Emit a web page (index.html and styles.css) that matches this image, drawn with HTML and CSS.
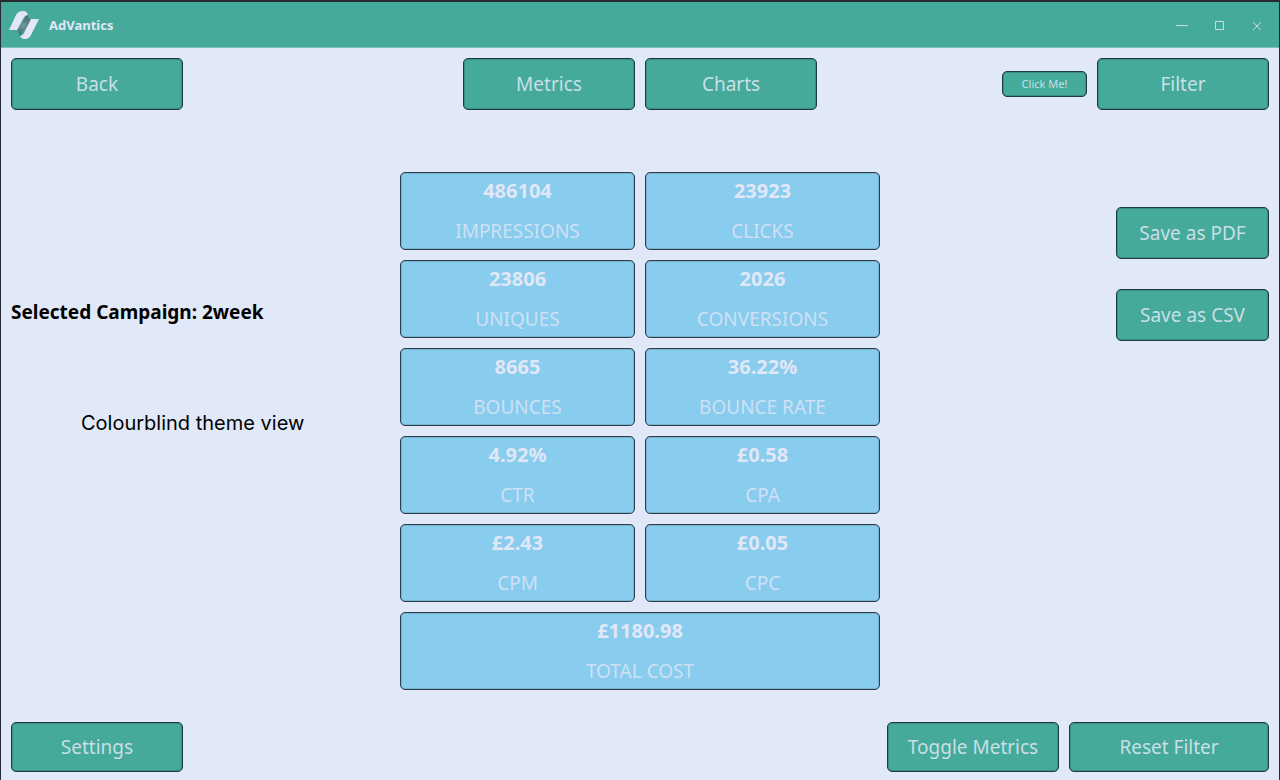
FILE: index.html
```html
<!DOCTYPE html>
<html lang="en">
<head>
<meta charset="utf-8">
<title>AdVantics</title>
<link rel="stylesheet" href="styles.css">
</head>
<body>
<div class="window">
  <header class="titlebar">
    <svg class="logo" viewBox="0 0 30 30" aria-hidden="true">
      <defs>
        <linearGradient id="fold-top" x1="0" y1="0" x2="0" y2="1">
          <stop offset="0" stop-color="#466a6c"/>
          <stop offset="1" stop-color="#7d979f"/>
        </linearGradient>
        <linearGradient id="fold-bottom" x1="0" y1="0" x2="0" y2="1">
          <stop offset="0" stop-color="#7d979f"/>
          <stop offset="1" stop-color="#466a6c"/>
        </linearGradient>
      </defs>
      <path d="M18 4L12 15L17 22L22 10Q19 8 18 4Z" fill="url(#fold-top)"/>
      <path d="M12 12L8 20Q10 23 11 26L18 16Z" fill="url(#fold-bottom)"/>
      <path d="M16 12L13 18L14 19L17 13Z" fill="#45aa99"/>
      <path d="M0 20L7 5Q9 1 14 1Q18 1 19 5Q16 5 14 9L8 20Z" fill="#e1e7f7"/>
      <path d="M30 9L22 25Q20 29 16 29Q12 29 11 26Q14 26 16 21L22 9Z" fill="#e1e7f7"/>
    </svg>
    <h1 class="app-name">AdVantics</h1>
    <div class="window-controls">
      <button class="window-control" aria-label="Minimize"><svg viewBox="0 0 12 12"><path d="M1 6.5H13"/></svg></button>
      <button class="window-control" aria-label="Maximize"><svg viewBox="0 0 12 12"><path d="M2.5 2.5H10.5V10.5H2.5Z"/></svg></button>
      <button class="window-control" aria-label="Close"><svg viewBox="0 0 12 12"><path d="M2 3L10 11M10 3L2 11"/></svg></button>
    </div>
  </header>

  <nav class="toolbar">
    <div class="group"><button class="button">Back</button></div>
    <div class="group"><button class="button">Metrics</button><button class="button">Charts</button></div>
    <div class="group group-end"><button class="button button-small">Click Me!</button><button class="button">Filter</button></div>
  </nav>

  <main class="content">
    <section class="campaign">
      <h2 class="campaign-name">Selected Campaign: 2week</h2>
      <p class="caption">Colourblind theme view</p>
    </section>
    <dl class="metrics">
      <div class="card"><dd>486104</dd><dt>IMPRESSIONS</dt></div>
      <div class="card"><dd>23923</dd><dt>CLICKS</dt></div>
      <div class="card"><dd>23806</dd><dt>UNIQUES</dt></div>
      <div class="card"><dd>2026</dd><dt>CONVERSIONS</dt></div>
      <div class="card"><dd>8665</dd><dt>BOUNCES</dt></div>
      <div class="card"><dd>36.22%</dd><dt>BOUNCE RATE</dt></div>
      <div class="card"><dd>4.92%</dd><dt>CTR</dt></div>
      <div class="card"><dd>£0.58</dd><dt>CPA</dt></div>
      <div class="card"><dd>£2.43</dd><dt>CPM</dt></div>
      <div class="card"><dd>£0.05</dd><dt>CPC</dt></div>
      <div class="card card-wide"><dd>£1180.98</dd><dt>TOTAL COST</dt></div>
    </dl>
    <aside class="exports">
      <button class="button button-export">Save as PDF</button>
      <button class="button button-export">Save as CSV</button>
    </aside>
  </main>

  <footer class="footer">
    <button class="button">Settings</button>
    <div class="group group-end"><button class="button">Toggle Metrics</button><button class="button button-reset">Reset Filter</button></div>
  </footer>
</div>
</body>
</html>
```
FILE: styles.css
```css
* { box-sizing: border-box; }

body {
  margin: 0;
  background: #e1e8f7;
  color: #000;
  font-family: "Noto Sans", "Open Sans", sans-serif;
}

h1, h2, p, dl, dd, dt { margin: 0; }

.window {
  display: flex;
  flex-direction: column;
  min-height: 100vh;
  border: 1px solid #252b30;
  border-top-width: 2px;
  border-bottom: 0;
}

.titlebar {
  display: flex;
  align-items: center;
  gap: 10px;
  height: 46px;
  padding: 0 10px 0 8px;
  background: #45aa99;
  border-bottom: 1px solid #79bfb8;
}

.logo { width: 30px; height: 30px; }

.app-name {
  flex: 1;
  color: #e1e7f7;
  font-size: 13px;
  line-height: 20px;
}

.window-controls { display: flex; gap: 14px; }

.window-control {
  width: 24px;
  height: 24px;
  padding: 6px;
  border: 0;
  background: none;
}

.window-control svg {
  display: block;
  width: 12px;
  height: 12px;
  overflow: visible;
  fill: none;
  stroke: #c5dde3;
}

.toolbar {
  display: grid;
  grid-template-columns: 1fr auto 1fr;
  padding: 10px 10px 0;
}

.group { display: flex; align-items: center; gap: 10px; }
.group-end { justify-content: flex-end; }

.button {
  width: 172px;
  height: 52px;
  padding: 0;
  border: 1px solid #1c3d3c;
  border-radius: 5px;
  background: #45aa99;
  box-shadow: inset 0 0 0 1px #3a8f82;
  color: #c9dfe7;
  font-family: inherit;
  font-size: 19px;
  line-height: 26px;
}

.button-small {
  width: 85px;
  height: 26px;
  font-size: 11px;
  line-height: 16px;
}

.content {
  flex: 1;
  display: grid;
  grid-template-columns: 1fr 480px 1fr;
  align-items: center;
  padding: 30px 10px 0;
}

.campaign { padding-bottom: 128px; }

.campaign-name { font-size: 19px; line-height: 26px; }

.caption {
  padding: 85px 0 0 70px;
  font-family: Inter, sans-serif;
  font-size: 20px;
  line-height: 26px;
}

.metrics {
  display: grid;
  grid-template-columns: 1fr 1fr;
  gap: 10px;
}

.card {
  height: 78px;
  padding-top: 5px;
  border: 1px solid #2b3f4c;
  border-radius: 5px;
  background: #88ccee;
  box-shadow: inset 0 0 0 1px #76b1cf;
  color: #e1e7f7;
  font-size: 19px;
  line-height: 26px;
  text-align: center;
}

.card dd { font-size: 20px; font-weight: bold; }
.card dt { padding-top: 14px; color: #cfe0f5; }
.card-wide { grid-column: span 2; }

.exports {
  display: flex;
  flex-direction: column;
  align-items: flex-end;
  gap: 30px;
  padding-bottom: 314px;
}

.button-export { width: 153px; }

.footer {
  display: flex;
  justify-content: space-between;
  padding: 0 10px 8px;
}

.footer .button { height: 50px; }
.footer .button-reset { width: 200px; }
```
